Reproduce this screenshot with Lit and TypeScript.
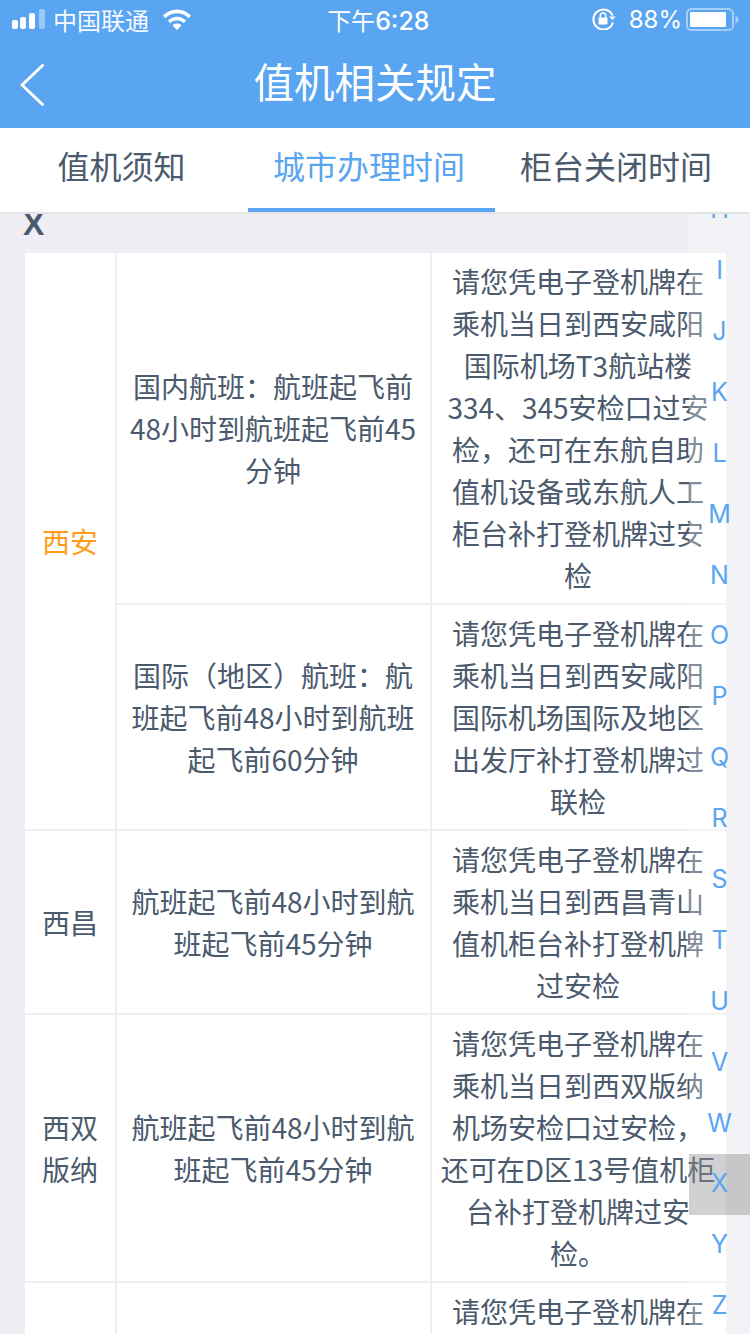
import { LitElement, html, css } from "lit";
import { customElement } from "lit/decorators.js";

interface Rule {
	time: string;
	note: string;
}

interface City {
	name: string;
	active?: boolean;
	rules: Rule[];
}

const CITIES: City[] = [
	{
		name: "西安",
		active: true,
		rules: [
			{
				time: "国内航班：航班起飞前48小时到航班起飞前45分钟",
				note: "请您凭电子登机牌在乘机当日到西安咸阳国际机场T3航站楼334、345安检口过安检，还可在东航自助值机设备或东航人工柜台补打登机牌过安检",
			},
			{
				time: "国际（地区）航班：航班起飞前48小时到航班起飞前60分钟",
				note: "请您凭电子登机牌在乘机当日到西安咸阳国际机场国际及地区出发厅补打登机牌过联检",
			},
		],
	},
	{
		name: "西昌",
		rules: [
			{
				time: "航班起飞前48小时到航班起飞前45分钟",
				note: "请您凭电子登机牌在乘机当日到西昌青山值机柜台补打登机牌过安检",
			},
		],
	},
	{
		name: "西双版纳",
		rules: [
			{
				time: "航班起飞前48小时到航班起飞前45分钟",
				note: "请您凭电子登机牌在乘机当日到西双版纳机场安检口过安检，还可在D区13号值机柜台补打登机牌过安检。",
			},
		],
	},
	{
		name: "西宁",
		rules: [
			{
				time: "航班起飞前48小时到航班起飞前45分钟",
				note: "请您凭电子登机牌在乘机当日到西宁机场值机柜台补打登机牌过安检",
			},
		],
	},
];

const TABS = ["值机须知", "城市办理时间", "柜台关闭时间"];
const LETTERS = "ABCDEFGHIJKLMNOPQRSTUVWXYZ".split("");

@customElement("app-root")
export class AppRoot extends LitElement {
	static styles = css`
		:host {
			width: 750px;
			height: 1334px;
			overflow: hidden;
			display: flex;
			flex-direction: column;
			background: #eeeef4;
			color: #4b5a6d;
			font-family: "Noto Sans CJK SC", "Noto Sans", sans-serif;
		}

		.top {
			height: 128px;
			flex: none;
			background: #59a5f1;
			color: #fff;
		}

		.status {
			height: 40px;
			padding: 0 11px 2px 12px;
			box-sizing: border-box;
			display: flex;
			align-items: center;
			font-size: 24px;
		}

		.status svg {
			display: block;
			flex: none;
		}

		.carrier {
			margin-left: 8px;
			width: 96px;
			white-space: nowrap;
			opacity: 0.95;
		}

		.wifi {
			margin-left: 14px;
		}

		.clock {
			flex: 1;
			text-align: center;
			font-family: Inter, sans-serif;
			font-size: 25px;
			font-weight: 500;
			padding-right: 26px;
		}

		.clock span {
			font-family: "Noto Sans CJK SC", sans-serif;
			font-size: 24px;
			font-weight: 400;
		}

		.percent {
			margin: 0 4px 0 13px;
			font-family: Inter, sans-serif;
			font-size: 24px;
		}

		.nav {
			height: 88px;
			position: relative;
			display: flex;
			align-items: center;
			justify-content: center;
			font-size: 40.5px;
			padding-bottom: 8px;
			box-sizing: border-box;
		}

		.back {
			position: absolute;
			left: 20px;
			top: 24px;
		}

		.tabs {
			height: 86px;
			flex: none;
			box-sizing: border-box;
			display: grid;
			grid-template-columns: 248px 247px 247px;
			background: #fff;
			border-bottom: 2px solid #e4e4e7;
			font-size: 32px;
		}

		.tab {
			box-sizing: border-box;
			height: 84px;
			padding: 0 5px 6px 0;
			display: flex;
			align-items: center;
			justify-content: center;
			white-space: nowrap;
			border-bottom: 4px solid transparent;
		}

		.tab.on {
			color: #59a5f1;
			border-bottom-color: #59a5f1;
		}

		.body {
			flex: 1;
			min-height: 0;
			position: relative;
			overflow: hidden;
		}

		.section {
			padding: 0 0 18px 23px;
			font-family: "Liberation Sans", sans-serif;
			font-size: 32px;
			font-weight: 700;
			line-height: 21px;
		}

		.table {
			width: 701px;
			margin-left: 25px;
			display: flex;
			flex-direction: column;
			gap: 2px;
			background: #eeeeee;
			font-size: 28px;
			line-height: 42px;
			text-align: center;
		}

		.group {
			display: grid;
			grid-template-columns: 90px 1fr;
			gap: 2px;
		}

		.rules {
			display: flex;
			flex-direction: column;
			gap: 2px;
		}

		.rule {
			display: grid;
			grid-template-columns: 313px 294px;
			gap: 2px;
		}

		.cell {
			box-sizing: border-box;
			display: flex;
			align-items: center;
			justify-content: center;
			padding: 7px 9px 7px 8px;
			background: #fff;
		}

		.cell.note {
			padding-right: 10px;
		}

		.city {
			padding: 7px 17px;
		}

		.city.on {
			color: #ff9c1a;
		}

		.index {
			position: absolute;
			top: -460.5px;
			right: 0;
			width: 61px;
			background: rgba(255, 255, 255, 0.3);
			font-family: Inter, sans-serif;
			font-size: 25px;
			color: #59a5f1;
		}

		.letter {
			box-sizing: border-box;
			height: 60.9px;
			padding-bottom: 2px;
			display: flex;
			align-items: center;
			justify-content: center;
		}

		.letter.on {
			background: rgba(0, 0, 0, 0.18);
		}
	`;

	render() {
		return html`
			<div class="top">
				<div class="status">
					<svg width="33" height="20" viewBox="0 0 33 20" fill="#fff">
						<rect x="0" y="11" width="6" height="9" rx="2" />
						<rect x="8" y="8" width="6" height="12" rx="2" />
						<rect x="17" y="4" width="6" height="16" rx="2" />
						<rect x="27" y="0" width="6" height="20" rx="2" opacity="0.4" />
					</svg>
					<span class="carrier">中国联通</span>
					<svg class="wifi" width="28" height="21" viewBox="0 0 28 21" fill="#fff">
						<path d="M0 6.500C7.500 -1.500 20.500 -1.500 28 6.500L25.600 9.200C19.300 2.600 8.700 2.600 2.400 9.200Z" />
						<path d="M5 11.600C10 6.400 18 6.400 23 11.600L20.600 14.200C17 10.400 11 10.400 7.400 14.200Z" />
						<path d="M9.600 16.400C12 14 16 14 18.400 16.400L14 21Z" />
					</svg>
					<span class="clock"><span>下午</span>6:28</span>
					<svg width="24" height="22" viewBox="0 0 24 22" fill="none" stroke="#fff" stroke-width="2">
						<path d="M21 14.500A10 10 0 1 1 20.600 7.500" />
						<path d="M23.800 8.400L20.400 12L17 8.400Z" fill="#fff" stroke="none" />
						<rect x="6.500" y="9.500" width="9" height="7" rx="1" fill="#fff" stroke="none" />
						<path d="M8.300 10V7.600a2.700 2.700 0 0 1 5.400 0V10" stroke-width="1.500" />
					</svg>
					<span class="percent">88%</span>
					<svg width="53" height="23" viewBox="0 0 53 23" fill="#fff">
						<rect x="1" y="1" width="46" height="21" rx="4.500" fill="none" stroke="#fff" stroke-width="2" opacity="0.45" />
						<rect x="4" y="4" width="36" height="15" rx="1" />
						<path d="M49.500 8C51.500 8.500 52.500 10 52.500 11.500C52.500 13 51.500 14.500 49.500 15Z" opacity="0.5" />
					</svg>
				</div>
				<div class="nav">
					<svg class="back" width="24" height="42" viewBox="0 0 24 42" fill="none" stroke="#fff" stroke-width="3" stroke-linecap="round" stroke-linejoin="round">
						<path d="M22.500 1.500L2 21L22.500 40.500" />
					</svg>
					值机相关规定
				</div>
			</div>
			<div class="tabs">
				${TABS.map((t, i) => html`<div class="tab ${i === 1 ? "on" : ""}">${t}</div>`)}
			</div>
			<div class="body">
				<div class="section">X</div>
				<div class="table">
					${CITIES.map(
						(c) => html`
							<div class="group">
								<div class="cell city ${c.active ? "on" : ""}">${c.name}</div>
								<div class="rules">
									${c.rules.map(
										(r) => html`
											<div class="rule">
												<div class="cell">${r.time}</div>
												<div class="cell note">${r.note}</div>
											</div>
										`,
									)}
								</div>
							</div>
						`,
					)}
				</div>
				<div class="index">
					${LETTERS.map((l) => html`<div class="letter ${l === "X" ? "on" : ""}">${l}</div>`)}
				</div>
			</div>
		`;
	}
}
